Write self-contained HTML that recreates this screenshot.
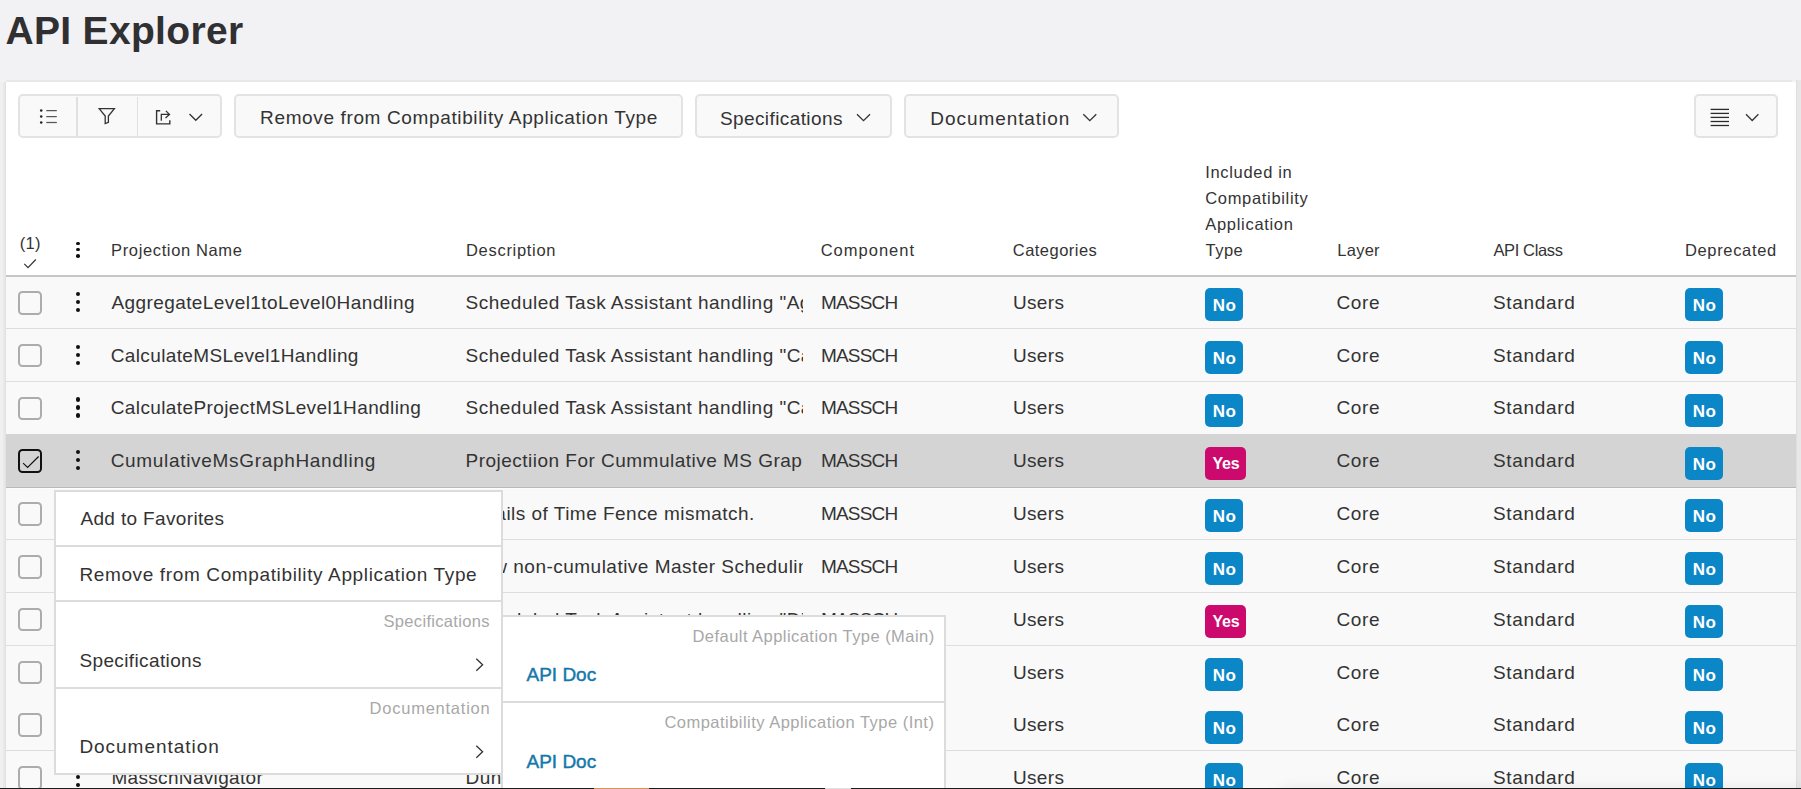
<!DOCTYPE html>
<html><head><meta charset="utf-8"><title>API Explorer</title>
<style>
html,body{margin:0;padding:0}
body{width:1801px;height:789px;overflow:hidden;position:relative;background:#f2f1f4;font-family:"Liberation Sans",sans-serif;color:#333}
.t{position:absolute;white-space:nowrap;line-height:1;font-family:"Liberation Sans",sans-serif}
.btn{position:absolute;box-sizing:border-box;border:2px solid #e3e3e3;border-radius:5px;background:#f9f9f9}
.cb{position:absolute;box-sizing:border-box;width:23.6px;height:23.6px;border:2px solid #acacac;border-radius:4.5px;left:18.2px}
.dot{position:absolute;width:4.4px;height:4.4px;border-radius:50%;background:#111}
.badge{position:absolute;box-sizing:border-box;height:33px;border-radius:5px;background:#0b87c8;color:#fff;font-weight:700;font-size:16px;line-height:33px;text-align:center;font-family:"Liberation Sans",sans-serif}
.yes{background:#cc0a6e}
svg{position:absolute;overflow:visible}
</style></head><body>
<div class="t" style="left:5.5px;top:10.69px;font-size:39px;font-weight:700;color:#303032;letter-spacing:0.318px;">API Explorer</div>
<div style="position:absolute;left:6px;top:82px;width:1790px;height:707px;background:#fff"></div>
<div style="position:absolute;left:0px;top:82px;width:3px;height:707px;background:#f0f0f1"></div>
<div style="position:absolute;left:3px;top:82px;width:2px;height:707px;background:#e9e9ea"></div>
<div style="position:absolute;left:5px;top:82px;width:1px;height:707px;background:#e0e0e1"></div>
<div style="position:absolute;left:6px;top:80px;width:1786px;height:2px;background:#e8e8ea"></div>
<div style="position:absolute;left:1796px;top:80px;width:1px;height:709px;background:#dededf"></div>
<div style="position:absolute;left:1797px;top:80px;width:4px;height:709px;background:#e8e8e9"></div>
<div class="btn" style="left:18px;top:94px;width:204px;height:44px"></div>
<div style="position:absolute;left:76.3px;top:96.5px;width:1.7999999999999972px;height:39.0px;background:#e0e0e0"></div>
<div style="position:absolute;left:136.5px;top:96.5px;width:1.8000000000000114px;height:39.0px;background:#e0e0e0"></div>
<div class="btn" style="left:234px;top:94px;width:449px;height:44px"></div>
<div class="btn" style="left:695px;top:94px;width:197px;height:44px"></div>
<div class="btn" style="left:904px;top:94px;width:215px;height:44px"></div>
<div class="btn" style="left:1694px;top:94px;width:84px;height:44px"></div>
<div class="t" style="left:260.1px;top:107.72px;font-size:19px;letter-spacing:0.632px;">Remove from Compatibility Application Type</div>
<div class="t" style="left:719.9px;top:108.62px;font-size:19px;letter-spacing:0.408px;">Specifications</div>
<div class="t" style="left:930.3px;top:108.62px;font-size:19px;letter-spacing:0.933px;">Documentation</div>
<svg style="left:0;top:0" width="1801" height="789">
<g fill="#222"><circle cx="41.2" cy="110.6" r="1.25"/><circle cx="41.2" cy="116.6" r="1.25"/><circle cx="41.2" cy="122.5" r="1.25"/></g>
<g stroke="#555" stroke-width="1.25"><line x1="46.3" y1="110.6" x2="56.8" y2="110.6"/><line x1="46.3" y1="116.6" x2="56.8" y2="116.6"/><line x1="46.3" y1="122.5" x2="56.8" y2="122.5"/></g>
<path d="M99.2 108.6 H114.4 L108.4 116 V122.3 L105.2 123.6 V116 Z" fill="none" stroke="#333" stroke-width="1.3" stroke-linejoin="miter"/>
<path d="M160.2 110.8 H156.6 V123.9 H169.8 V120.2" fill="none" stroke="#333" stroke-width="1.4"/>
<path d="M161.3 120.8 V114.4 H169.4 M165.9 110.9 L169.5 114.4 L165.5 118.1" fill="none" stroke="#333" stroke-width="1.3"/>
<path d="M189.5 114 L195.8 120.3 L202.1 114" fill="none" stroke="#333" stroke-width="1.3"/>
<path d="M857 114.2 L863.5 120.7 L870 114.2" fill="none" stroke="#333" stroke-width="1.3"/>
<path d="M1083.3 114.2 L1089.8 120.7 L1096.3 114.2" fill="none" stroke="#333" stroke-width="1.3"/>
<g stroke="#2a2a2a" stroke-width="1.3"><line x1="1710.6" y1="109.4" x2="1729" y2="109.4"/><line x1="1710.6" y1="113.4" x2="1729" y2="113.4"/><line x1="1710.6" y1="117.4" x2="1729" y2="117.4"/><line x1="1710.6" y1="121.5" x2="1729" y2="121.5"/><line x1="1710.6" y1="125.5" x2="1729" y2="125.5"/></g>
<path d="M1746 114.3 L1752.2 120.5 L1758.4 114.3" fill="none" stroke="#333" stroke-width="1.3"/>
</svg>
<div class="t" style="left:19.7px;top:234.53px;font-size:16.5px;letter-spacing:0.3px;">(1)</div>
<svg style="left:0;top:0" width="60" height="280"><path d="M24.3 263.8 L28 267.6 L35.8 259.5" fill="none" stroke="#333" stroke-width="1.2"/></svg>
<div class="dot" style="left:76.2px;top:241.6px;width:3.6px;height:3.6px"></div>
<div class="dot" style="left:76.2px;top:247.8px;width:3.6px;height:3.6px"></div>
<div class="dot" style="left:76.2px;top:254.0px;width:3.6px;height:3.6px"></div>
<div class="t" style="left:111.1px;top:242.13px;font-size:16.5px;letter-spacing:0.629px;">Projection Name</div>
<div class="t" style="left:466.0px;top:242.13px;font-size:16.5px;letter-spacing:0.7px;">Description</div>
<div class="t" style="left:820.7px;top:242.13px;font-size:16.5px;letter-spacing:1.0px;">Component</div>
<div class="t" style="left:1012.8px;top:242.13px;font-size:16.5px;letter-spacing:0.467px;">Categories</div>
<div class="t" style="left:1205.2px;top:163.83px;font-size:16.5px;letter-spacing:0.68px;">Included in</div>
<div class="t" style="left:1205.2px;top:189.63px;font-size:16.5px;letter-spacing:0.683px;">Compatibility</div>
<div class="t" style="left:1205.3px;top:216.03px;font-size:16.5px;letter-spacing:0.69px;">Application</div>
<div class="t" style="left:1205.6px;top:242.13px;font-size:16.5px;letter-spacing:0.467px;">Type</div>
<div class="t" style="left:1337.3px;top:242.13px;font-size:16.5px;letter-spacing:0.25px;">Layer</div>
<div class="t" style="left:1493.4px;top:242.13px;font-size:16.5px;letter-spacing:-0.363px;">API Class</div>
<div class="t" style="left:1684.9px;top:242.13px;font-size:16.5px;letter-spacing:0.667px;">Deprecated</div>
<div style="position:absolute;left:6px;top:275px;width:1790px;height:2px;background:#c6c6c6"></div>
<div style="position:absolute;left:6px;top:277px;width:1790px;height:53px;background:#f9f9f9"></div>
<div style="position:absolute;left:6px;top:328px;width:1790px;height:2px;background:#dedede"></div>
<div class="cb" style="top:291.00px"></div>
<div class="dot" style="left:75.8px;top:291.70px"></div>
<div class="dot" style="left:75.8px;top:299.70px"></div>
<div class="dot" style="left:75.8px;top:307.70px"></div>
<div class="t" style="left:111.4px;top:293.22px;font-size:19px;letter-spacing:0.42px;">AggregateLevel1toLevel0Handling</div>
<div class="t" style="left:466px;top:292.65px;width:337px;height:26px;overflow:hidden;font-size:19px;letter-spacing:0.48px"><span style="margin-left:-0.40px">Scheduled Task Assistant handling "Aggregate Level 1 to Level 0"</span></div>
<div class="t" style="left:820.9px;top:293.22px;font-size:19px;letter-spacing:-0.78px;">MASSCH</div>
<div class="t" style="left:1013.0px;top:293.22px;font-size:19px;letter-spacing:0.325px;">Users</div>
<div class="badge" style="left:1205px;top:288px;width:38px"></div>
<div class="t" style="left:1212.7px;top:296.81px;font-size:17px;font-weight:700;color:#fff;letter-spacing:0.5px;">No</div>
<div class="t" style="left:1336.5px;top:293.22px;font-size:19px;letter-spacing:0.633px;">Core</div>
<div class="t" style="left:1492.9px;top:293.22px;font-size:19px;letter-spacing:0.686px;">Standard</div>
<div class="badge" style="left:1685px;top:288px;width:38px"></div>
<div class="t" style="left:1692.7px;top:296.81px;font-size:17px;font-weight:700;color:#fff;letter-spacing:0.5px;">No</div>
<div style="position:absolute;left:6px;top:329px;width:1790px;height:54px;background:#f9f9f9"></div>
<div style="position:absolute;left:6px;top:381px;width:1790px;height:2px;background:#dedede"></div>
<div class="cb" style="top:343.80px"></div>
<div class="dot" style="left:75.8px;top:344.50px"></div>
<div class="dot" style="left:75.8px;top:352.50px"></div>
<div class="dot" style="left:75.8px;top:360.50px"></div>
<div class="t" style="left:110.7px;top:346.12px;font-size:19px;letter-spacing:0.375px;">CalculateMSLevel1Handling</div>
<div class="t" style="left:466px;top:345.55px;width:337px;height:26px;overflow:hidden;font-size:19px;letter-spacing:0.48px"><span style="margin-left:-0.40px">Scheduled Task Assistant handling "Calculate MS Level 1"</span></div>
<div class="t" style="left:820.9px;top:346.12px;font-size:19px;letter-spacing:-0.78px;">MASSCH</div>
<div class="t" style="left:1013.0px;top:346.12px;font-size:19px;letter-spacing:0.325px;">Users</div>
<div class="badge" style="left:1205px;top:341px;width:38px"></div>
<div class="t" style="left:1212.7px;top:349.81px;font-size:17px;font-weight:700;color:#fff;letter-spacing:0.5px;">No</div>
<div class="t" style="left:1336.5px;top:346.12px;font-size:19px;letter-spacing:0.633px;">Core</div>
<div class="t" style="left:1492.9px;top:346.12px;font-size:19px;letter-spacing:0.686px;">Standard</div>
<div class="badge" style="left:1685px;top:341px;width:38px"></div>
<div class="t" style="left:1692.7px;top:349.81px;font-size:17px;font-weight:700;color:#fff;letter-spacing:0.5px;">No</div>
<div style="position:absolute;left:6px;top:382px;width:1790px;height:54px;background:#f9f9f9"></div>
<div style="position:absolute;left:6px;top:434px;width:1790px;height:2px;background:#dedede"></div>
<div class="cb" style="top:396.60px"></div>
<div class="dot" style="left:75.8px;top:397.30px"></div>
<div class="dot" style="left:75.8px;top:405.30px"></div>
<div class="dot" style="left:75.8px;top:413.30px"></div>
<div class="t" style="left:110.7px;top:398.12px;font-size:19px;letter-spacing:0.397px;">CalculateProjectMSLevel1Handling</div>
<div class="t" style="left:466px;top:397.55px;width:337px;height:26px;overflow:hidden;font-size:19px;letter-spacing:0.48px"><span style="margin-left:-0.40px">Scheduled Task Assistant handling "Calculate Project MS Level 1"</span></div>
<div class="t" style="left:820.9px;top:398.12px;font-size:19px;letter-spacing:-0.78px;">MASSCH</div>
<div class="t" style="left:1013.0px;top:398.12px;font-size:19px;letter-spacing:0.325px;">Users</div>
<div class="badge" style="left:1205px;top:394px;width:38px"></div>
<div class="t" style="left:1212.7px;top:402.81px;font-size:17px;font-weight:700;color:#fff;letter-spacing:0.5px;">No</div>
<div class="t" style="left:1336.5px;top:398.12px;font-size:19px;letter-spacing:0.633px;">Core</div>
<div class="t" style="left:1492.9px;top:398.12px;font-size:19px;letter-spacing:0.686px;">Standard</div>
<div class="badge" style="left:1685px;top:394px;width:38px"></div>
<div class="t" style="left:1692.7px;top:402.81px;font-size:17px;font-weight:700;color:#fff;letter-spacing:0.5px;">No</div>
<div style="position:absolute;left:6px;top:434px;width:1790px;height:53px;background:#d4d4d4"></div>
<div style="position:absolute;left:6px;top:487px;width:1790px;height:1px;background:#b9b9b9"></div>
<div class="cb" style="top:449.00px;border:2px solid #111"></div>
<svg style="left:0;top:0" width="60" height="789"><path d="M23.1 463.10 L27.6 467.40 L38.6 456.50" fill="none" stroke="#111" stroke-width="1.2"/></svg>
<div class="dot" style="left:75.8px;top:450.10px"></div>
<div class="dot" style="left:75.8px;top:458.10px"></div>
<div class="dot" style="left:75.8px;top:466.10px"></div>
<div class="t" style="left:110.7px;top:451.12px;font-size:19px;letter-spacing:0.683px;">CumulativeMsGraphHandling</div>
<div class="t" style="left:466px;top:450.55px;width:337px;height:26px;overflow:hidden;font-size:19px;letter-spacing:0.48px"><span style="margin-left:-0.40px">Projectiion For Cummulative MS Graph Handling</span></div>
<div class="t" style="left:820.9px;top:451.12px;font-size:19px;letter-spacing:-0.78px;">MASSCH</div>
<div class="t" style="left:1013.0px;top:451.12px;font-size:19px;letter-spacing:0.325px;">Users</div>
<div class="badge yes" style="left:1205px;top:447px;width:41px"></div>
<div class="t" style="left:1212.4px;top:455.66px;font-size:16px;font-weight:700;color:#fff;letter-spacing:-0.2px;">Yes</div>
<div class="t" style="left:1336.5px;top:451.12px;font-size:19px;letter-spacing:0.633px;">Core</div>
<div class="t" style="left:1492.9px;top:451.12px;font-size:19px;letter-spacing:0.686px;">Standard</div>
<div class="badge" style="left:1685px;top:447px;width:38px"></div>
<div class="t" style="left:1692.7px;top:455.81px;font-size:17px;font-weight:700;color:#fff;letter-spacing:0.5px;">No</div>
<div style="position:absolute;left:6px;top:488px;width:1790px;height:1px;background:#fdfdfd"></div>
<div style="position:absolute;left:6px;top:489px;width:1790px;height:52px;background:#f9f9f9"></div>
<div style="position:absolute;left:6px;top:539px;width:1790px;height:2px;background:#dedede"></div>
<div class="cb" style="top:502.20px"></div>
<div class="dot" style="left:75.8px;top:502.90px"></div>
<div class="dot" style="left:75.8px;top:510.90px"></div>
<div class="dot" style="left:75.8px;top:518.90px"></div>
<div class="t" style="left:111px;top:504.12px;font-size:19px;letter-spacing:0.4px;">DemandTimeFenceMismatch</div>
<div class="t" style="left:466px;top:503.55px;width:337px;height:26px;overflow:hidden;font-size:19px;letter-spacing:0.48px"><span style="margin-left:-63.70px">Shows details of Time Fence mismatch.</span></div>
<div class="t" style="left:820.9px;top:504.12px;font-size:19px;letter-spacing:-0.78px;">MASSCH</div>
<div class="t" style="left:1013.0px;top:504.12px;font-size:19px;letter-spacing:0.325px;">Users</div>
<div class="badge" style="left:1205px;top:499px;width:38px"></div>
<div class="t" style="left:1212.7px;top:507.81px;font-size:17px;font-weight:700;color:#fff;letter-spacing:0.5px;">No</div>
<div class="t" style="left:1336.5px;top:504.12px;font-size:19px;letter-spacing:0.633px;">Core</div>
<div class="t" style="left:1492.9px;top:504.12px;font-size:19px;letter-spacing:0.686px;">Standard</div>
<div class="badge" style="left:1685px;top:499px;width:38px"></div>
<div class="t" style="left:1692.7px;top:507.81px;font-size:17px;font-weight:700;color:#fff;letter-spacing:0.5px;">No</div>
<div style="position:absolute;left:6px;top:540px;width:1790px;height:54px;background:#f9f9f9"></div>
<div style="position:absolute;left:6px;top:592px;width:1790px;height:2px;background:#dedede"></div>
<div class="cb" style="top:555.00px"></div>
<div class="dot" style="left:75.8px;top:555.70px"></div>
<div class="dot" style="left:75.8px;top:563.70px"></div>
<div class="dot" style="left:75.8px;top:571.70px"></div>
<div class="t" style="left:111px;top:557.12px;font-size:19px;letter-spacing:0.4px;">NonCumulativeMsHandling</div>
<div class="t" style="left:466px;top:556.55px;width:337px;height:26px;overflow:hidden;font-size:19px;letter-spacing:0.48px"><span style="margin-left:-122.80px">Projection for view non-cumulative Master Scheduling</span></div>
<div class="t" style="left:820.9px;top:557.12px;font-size:19px;letter-spacing:-0.78px;">MASSCH</div>
<div class="t" style="left:1013.0px;top:557.12px;font-size:19px;letter-spacing:0.325px;">Users</div>
<div class="badge" style="left:1205px;top:552px;width:38px"></div>
<div class="t" style="left:1212.7px;top:560.81px;font-size:17px;font-weight:700;color:#fff;letter-spacing:0.5px;">No</div>
<div class="t" style="left:1336.5px;top:557.12px;font-size:19px;letter-spacing:0.633px;">Core</div>
<div class="t" style="left:1492.9px;top:557.12px;font-size:19px;letter-spacing:0.686px;">Standard</div>
<div class="badge" style="left:1685px;top:552px;width:38px"></div>
<div class="t" style="left:1692.7px;top:560.81px;font-size:17px;font-weight:700;color:#fff;letter-spacing:0.5px;">No</div>
<div style="position:absolute;left:6px;top:593px;width:1790px;height:54px;background:#f9f9f9"></div>
<div style="position:absolute;left:6px;top:645px;width:1790px;height:2px;background:#dedede"></div>
<div class="cb" style="top:607.80px"></div>
<div class="dot" style="left:75.8px;top:608.50px"></div>
<div class="dot" style="left:75.8px;top:616.50px"></div>
<div class="dot" style="left:75.8px;top:624.50px"></div>
<div class="t" style="left:111px;top:610.12px;font-size:19px;letter-spacing:0.4px;">DisaggregateHandling</div>
<div class="t" style="left:466px;top:609.55px;width:337px;height:26px;overflow:hidden;font-size:19px;letter-spacing:0.48px"><span style="margin-left:-0.40px">Scheduled Task Assistant handling "Disaggregate"</span></div>
<div class="t" style="left:820.9px;top:610.12px;font-size:19px;letter-spacing:-0.78px;">MASSCH</div>
<div class="t" style="left:1013.0px;top:610.12px;font-size:19px;letter-spacing:0.325px;">Users</div>
<div class="badge yes" style="left:1205px;top:605px;width:41px"></div>
<div class="t" style="left:1212.4px;top:613.66px;font-size:16px;font-weight:700;color:#fff;letter-spacing:-0.2px;">Yes</div>
<div class="t" style="left:1336.5px;top:610.12px;font-size:19px;letter-spacing:0.633px;">Core</div>
<div class="t" style="left:1492.9px;top:610.12px;font-size:19px;letter-spacing:0.686px;">Standard</div>
<div class="badge" style="left:1685px;top:605px;width:38px"></div>
<div class="t" style="left:1692.7px;top:613.81px;font-size:17px;font-weight:700;color:#fff;letter-spacing:0.5px;">No</div>
<div style="position:absolute;left:6px;top:646px;width:1790px;height:54px;background:#f9f9f9"></div>
<div style="position:absolute;left:6px;top:698px;width:1790px;height:2px;background:#dedede"></div>
<div class="cb" style="top:660.60px"></div>
<div class="dot" style="left:75.8px;top:661.30px"></div>
<div class="dot" style="left:75.8px;top:669.30px"></div>
<div class="dot" style="left:75.8px;top:677.30px"></div>
<div class="t" style="left:111px;top:663.12px;font-size:19px;letter-spacing:0.4px;">LevelZeroHandling</div>
<div class="t" style="left:466px;top:662.55px;width:337px;height:26px;overflow:hidden;font-size:19px;letter-spacing:0.48px"><span style="margin-left:-0.40px">Scheduled Task Assistant handling</span></div>
<div class="t" style="left:820.9px;top:663.12px;font-size:19px;letter-spacing:-0.78px;">MASSCH</div>
<div class="t" style="left:1013.0px;top:663.12px;font-size:19px;letter-spacing:0.325px;">Users</div>
<div class="badge" style="left:1205px;top:658px;width:38px"></div>
<div class="t" style="left:1212.7px;top:666.81px;font-size:17px;font-weight:700;color:#fff;letter-spacing:0.5px;">No</div>
<div class="t" style="left:1336.5px;top:663.12px;font-size:19px;letter-spacing:0.633px;">Core</div>
<div class="t" style="left:1492.9px;top:663.12px;font-size:19px;letter-spacing:0.686px;">Standard</div>
<div class="badge" style="left:1685px;top:658px;width:38px"></div>
<div class="t" style="left:1692.7px;top:666.81px;font-size:17px;font-weight:700;color:#fff;letter-spacing:0.5px;">No</div>
<div style="position:absolute;left:6px;top:698px;width:1790px;height:54px;background:#f9f9f9"></div>
<div style="position:absolute;left:6px;top:750px;width:1790px;height:2px;background:#dedede"></div>
<div class="cb" style="top:713.40px"></div>
<div class="dot" style="left:75.8px;top:714.10px"></div>
<div class="dot" style="left:75.8px;top:722.10px"></div>
<div class="dot" style="left:75.8px;top:730.10px"></div>
<div class="t" style="left:111px;top:715.12px;font-size:19px;letter-spacing:0.4px;">MasschLevelOneHandling</div>
<div class="t" style="left:466px;top:714.55px;width:337px;height:26px;overflow:hidden;font-size:19px;letter-spacing:0.48px"><span style="margin-left:-0.40px">Scheduled Task Assistant handling</span></div>
<div class="t" style="left:820.9px;top:715.12px;font-size:19px;letter-spacing:-0.78px;">MASSCH</div>
<div class="t" style="left:1013.0px;top:715.12px;font-size:19px;letter-spacing:0.325px;">Users</div>
<div class="badge" style="left:1205px;top:711px;width:38px"></div>
<div class="t" style="left:1212.7px;top:719.81px;font-size:17px;font-weight:700;color:#fff;letter-spacing:0.5px;">No</div>
<div class="t" style="left:1336.5px;top:715.12px;font-size:19px;letter-spacing:0.633px;">Core</div>
<div class="t" style="left:1492.9px;top:715.12px;font-size:19px;letter-spacing:0.686px;">Standard</div>
<div class="badge" style="left:1685px;top:711px;width:38px"></div>
<div class="t" style="left:1692.7px;top:719.81px;font-size:17px;font-weight:700;color:#fff;letter-spacing:0.5px;">No</div>
<div style="position:absolute;left:6px;top:751px;width:1790px;height:54px;background:#f9f9f9"></div>
<div style="position:absolute;left:6px;top:803px;width:1790px;height:2px;background:#dedede"></div>
<div class="cb" style="top:766.20px"></div>
<div class="dot" style="left:75.8px;top:766.90px"></div>
<div class="dot" style="left:75.8px;top:774.90px"></div>
<div class="dot" style="left:75.8px;top:782.90px"></div>
<div class="t" style="left:111.4px;top:768.12px;font-size:19px;letter-spacing:0.329px;">MasschNavigator</div>
<div class="t" style="left:466px;top:767.55px;width:337px;height:26px;overflow:hidden;font-size:19px;letter-spacing:0.48px"><span style="margin-left:-0.40px">Dunning projection for navigator</span></div>
<div class="t" style="left:820.9px;top:768.12px;font-size:19px;letter-spacing:-0.78px;">MASSCH</div>
<div class="t" style="left:1013.0px;top:768.12px;font-size:19px;letter-spacing:0.325px;">Users</div>
<div class="badge" style="left:1205px;top:763px;width:38px"></div>
<div class="t" style="left:1212.7px;top:771.81px;font-size:17px;font-weight:700;color:#fff;letter-spacing:0.5px;">No</div>
<div class="t" style="left:1336.5px;top:768.12px;font-size:19px;letter-spacing:0.633px;">Core</div>
<div class="t" style="left:1492.9px;top:768.12px;font-size:19px;letter-spacing:0.686px;">Standard</div>
<div class="badge" style="left:1685px;top:763px;width:38px"></div>
<div class="t" style="left:1692.7px;top:771.81px;font-size:17px;font-weight:700;color:#fff;letter-spacing:0.5px;">No</div>
<div style="position:absolute;left:54px;top:490px;width:449px;height:285px;background:#fff;box-sizing:border-box;border:2px solid #dcdcdc"></div>
<div style="position:absolute;left:56px;top:545px;width:445px;height:2px;background:#dcdcdc"></div>
<div style="position:absolute;left:56px;top:600px;width:445px;height:2px;background:#dcdcdc"></div>
<div style="position:absolute;left:56px;top:687px;width:445px;height:2px;background:#dcdcdc"></div>
<div class="t" style="left:80.4px;top:508.72px;font-size:19px;letter-spacing:0.353px;">Add to Favorites</div>
<div class="t" style="left:79.4px;top:564.82px;font-size:19px;letter-spacing:0.632px;">Remove from Compatibility Application Type</div>
<div class="t" style="left:383.5px;top:613.33px;font-size:16.5px;color:#a8a8a8;letter-spacing:0.323px;">Specifications</div>
<div class="t" style="left:79.4px;top:650.62px;font-size:19px;letter-spacing:0.377px;">Specifications</div>
<div class="t" style="left:369.6px;top:700.13px;font-size:16.5px;color:#a8a8a8;letter-spacing:0.758px;">Documentation</div>
<div class="t" style="left:79.4px;top:737.32px;font-size:19px;letter-spacing:0.967px;">Documentation</div>
<svg style="left:0;top:0" width="1801" height="789">
<path d="M476.3 658.7 L482.6 664.7 L476.3 670.7" fill="none" stroke="#333" stroke-width="1.3"/>
<path d="M476.3 745.7 L482.6 751.7 L476.3 757.7" fill="none" stroke="#333" stroke-width="1.3"/>
</svg>
<div style="position:absolute;left:501px;top:615px;width:445px;height:185px;background:#fff;box-sizing:border-box;border:2px solid #dcdcdc"></div>
<div style="position:absolute;left:503px;top:701px;width:441px;height:2px;background:#dcdcdc"></div>
<div class="t" style="left:692.5px;top:627.73px;font-size:16.5px;color:#a8a8a8;letter-spacing:0.453px;">Default Application Type (Main)</div>
<div class="t" style="left:526.5px;top:664.72px;font-size:19px;color:#1478ab;-webkit-text-stroke:0.45px #1478ab;">API Doc</div>
<div class="t" style="left:664.4px;top:714.43px;font-size:16.5px;color:#a8a8a8;letter-spacing:0.477px;">Compatibility Application Type (Int)</div>
<div class="t" style="left:526.5px;top:751.72px;font-size:19px;color:#1478ab;-webkit-text-stroke:0.45px #1478ab;">API Doc</div>
<div style="position:absolute;left:0px;top:788px;width:1801px;height:1px;background:#1c1c1c"></div>
<div style="position:absolute;left:594px;top:788px;width:55px;height:1px;background:#d8925e"></div>
<div style="position:absolute;left:1280px;top:792px;width:620px;height:58px;background:#ddd;box-shadow:0 0 16px 2px rgba(0,0,0,0.10);border-radius:8px"></div>
<div style="position:absolute;left:825px;top:788px;width:26px;height:1px;background:#e0e0e0"></div>
</body></html>
